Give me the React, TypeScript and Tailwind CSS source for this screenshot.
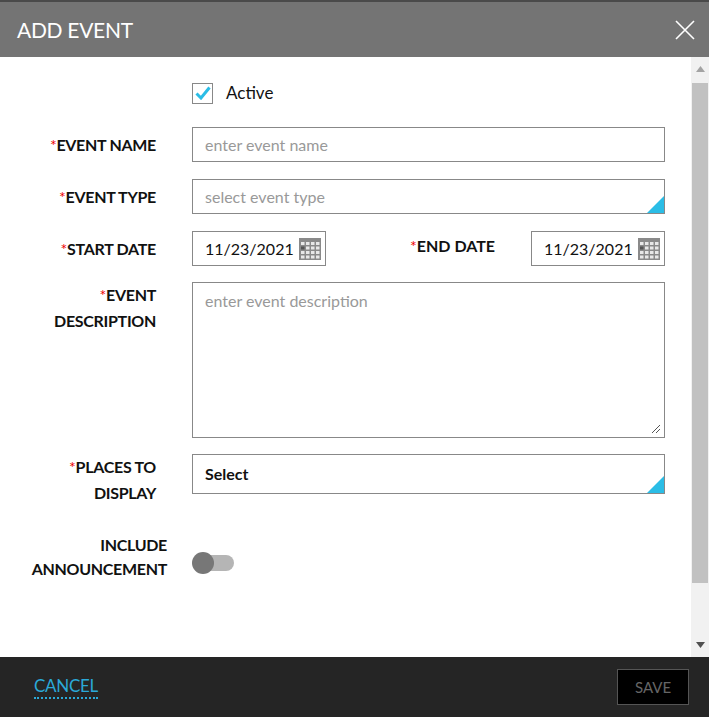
import type { ReactNode } from 'react'

const font = { fontFamily: 'Lato, "Open Sans", sans-serif' }

function Label({ children, req }: { children: ReactNode; req?: boolean }) {
  return (
    <div className="w-[156px] shrink-0 text-right text-[16px] font-bold leading-[26px] text-[#111] tracking-[-0.3px]">
      {req && <span className="text-[#e00] font-normal">*</span>}
      {children}
    </div>
  )
}

function Corner() {
  return (
    <svg className="absolute right-0 bottom-0" width="17" height="17" viewBox="0 0 17 17">
      <polygon points="17,0 17,17 0,17" fill="#2bbde6" />
    </svg>
  )
}

function Cal() {
  return (
    <svg width="22" height="22" viewBox="0 0 22 22" className="absolute right-[4px] top-[6px]">
      <rect x="0" y="0" width="22" height="22" fill="#8a8a8a" />
      {[0, 1, 2, 3].map(r =>
        [0, 1, 2, 3].map(c => (
          <rect key={`${r}${c}`} x={2 + c * 5} y={4 + r * 4.5} width="3.5" height="3" fill={r === 1 && c === 0 ? '#555' : '#e8e8e8'} />
        )),
      )}
    </svg>
  )
}

function DateBox() {
  return (
    <div className="relative w-[134px] h-[35px] border border-[#888] flex items-center pl-[12px] text-[16px] text-[#111]">
      11/23/2021
      <Cal />
    </div>
  )
}

export default function App() {
  return (
    <div className="w-[709px] h-[717px] flex flex-col bg-white" style={font}>
      <div className="h-[57px] bg-[#747474] border-t-2 border-[#4a4a4a] flex items-center justify-between pl-[17px] pr-[14px]">
        <span className="text-white text-[21px] tracking-[-0.3px]">ADD EVENT</span>
        <svg width="20" height="20" viewBox="0 0 20 20" stroke="white" strokeWidth="1.6">
          <path d="M1 1L19 19M19 1L1 19" />
        </svg>
      </div>

      <div className="flex-1 flex">
        <div className="flex-1 pt-[25px]">
          <div className="flex items-center gap-[13px] pl-[192px] h-[22px]">
            <div className="w-[21px] h-[21px] border border-[#888] flex items-center justify-center">
              <svg width="16" height="14" viewBox="0 0 16 14">
                <path d="M1.5 7.5L6 12L14.5 1.5" stroke="#2bbde6" strokeWidth="3" fill="none" />
              </svg>
            </div>
            <span className="text-[17px] text-[#111]">Active</span>
          </div>

          <div className="flex gap-[36px] mt-[23px] items-center">
            <Label req>EVENT NAME</Label>
            <div className="w-[473px] h-[35px] border border-[#888] flex items-center pl-[12px] text-[16px] text-[#999]">enter event name</div>
          </div>

          <div className="flex gap-[36px] mt-[17px] items-center">
            <Label req>EVENT TYPE</Label>
            <div className="relative w-[473px] h-[35px] border border-[#888] flex items-center pl-[12px] text-[16px] text-[#999]">
              select event type
              <Corner />
            </div>
          </div>

          <div className="flex gap-[36px] mt-[17px] items-center">
            <Label req>START DATE</Label>
            <DateBox />
            <div className="w-[169px] text-right text-[16px] font-bold text-[#111] pr-[36px] leading-[26px] mt-[-6px]">
              <span className="text-[#e00] font-normal">*</span>END DATE
            </div>
            <div className="ml-[-36px]"><DateBox /></div>
          </div>

          <div className="flex gap-[36px] mt-[16px]">
            <Label req>EVENT<br />DESCRIPTION</Label>
            <div className="relative w-[473px] h-[156px] border border-[#888] pl-[12px] pt-[6px] text-[16px] text-[#999]">
              enter event description
              <svg className="absolute right-[3px] bottom-[3px]" width="10" height="10" viewBox="0 0 10 10" stroke="#555" strokeWidth="1">
                <path d="M9 1L1 9M9 5L5 9" />
              </svg>
            </div>
          </div>

          <div className="flex gap-[36px] mt-[16px]">
            <Label req>PLACES TO<br />DISPLAY</Label>
            <div className="relative w-[473px] h-[40px] border border-[#888] flex items-center pl-[12px] text-[16px] font-bold text-[#111]">
              Select
              <Corner />
            </div>
          </div>

          <div className="flex mt-[27px] items-center">
            <div className="w-[167px] text-right text-[16px] font-bold leading-[24px] text-[#111] tracking-[-0.3px]">INCLUDE<br />ANNOUNCEMENT</div>
            <div className="ml-[25px] mt-[12px] relative w-[42px] h-[22px] flex items-center">
              <div className="absolute left-[8px] w-[34px] h-[16px] rounded-full bg-[#b5b5b5]" />
              <div className="relative w-[22px] h-[22px] rounded-full bg-[#777]" />
            </div>
          </div>
        </div>

        <div className="w-[18px] bg-[#f1f1f1] flex flex-col items-center">
          <svg width="9" height="6" viewBox="0 0 9 6" className="mt-[9px]"><polygon points="4.5,0 9,6 0,6" fill="#a3a3a3" /></svg>
          <div className="w-[16px] h-[500px] bg-[#c1c1c1] mt-[11px]" />
          <div className="flex-1" />
          <svg width="9" height="6" viewBox="0 0 9 6" className="mb-[9px]"><polygon points="0,0 9,0 4.5,6" fill="#505050" /></svg>
        </div>
      </div>

      <div className="h-[60px] bg-[#252525] flex items-center justify-between pl-[34px] pr-[20px]">
        <span className="text-[#2ba9d8] text-[17px] border-b-2 border-dotted border-[#2ba9d8] leading-[22px] tracking-[-0.3px]">CANCEL</span>
        <div className="w-[72px] h-[36px] bg-black border border-[#555] flex items-center justify-center text-[#666] text-[15px]">SAVE</div>
      </div>
    </div>
  )
}
